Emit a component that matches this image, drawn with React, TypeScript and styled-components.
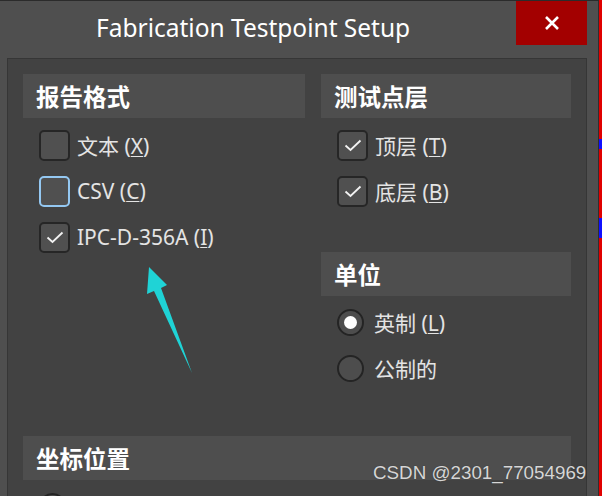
import styled, { createGlobalStyle } from "styled-components";

const GlobalStyle = createGlobalStyle`
  html, body {
    margin: 0;
    padding: 0;
    width: 602px;
    height: 496px;
    overflow: hidden;
    background: #e00000;
  }
`;

const Screen = styled.div`
  display: flex;
  width: 602px;
  height: 496px;
  overflow: hidden;
  background: linear-gradient(
    #e00000 0 28%,
    #1010ff 28% 30%,
    #e00000 30% 44%,
    #1010ff 44% 48%,
    #e00000 48%
  );
`;

const Frame = styled.div`
  position: relative;
  width: 599px;
  height: 496px;
  flex: none;
  box-sizing: border-box;
  background: #4f4f4f;
  border-top: 1px solid #2b2b2b;
  border-right: 1px solid #2f2f2f;
  overflow: hidden;
  font-family: "Noto Sans", "Noto Sans CJK SC", sans-serif;
`;

const TitleBar = styled.div`
  display: flex;
  height: 57px;
`;

const Title = styled.div`
  flex: 1;
  padding-left: 96px;
  padding-top: 10px;
  font-size: 24.5px;
  color: #ffffff;
`;

const CloseButton = styled.div`
  width: 71px;
  height: 44px;
  margin-right: 11px;
  background: #a30000;
  display: flex;
  align-items: center;
  justify-content: center;
`;

const Panel = styled.div`
  margin-left: 7px;
  width: 580px;
  height: 460px;
  box-sizing: border-box;
  background: #424242;
  border: 1px solid #363636;
  padding: 15px 15px 0 15px;
`;

const Columns = styled.div`
  display: grid;
  grid-template-columns: 282px 250px;
  column-gap: 16px;
  align-items: start;
`;

const Column = styled.div`
  display: flex;
  flex-direction: column;
`;

const Header = styled.div<{ $gap?: number }>`
  height: 44px;
  margin-top: ${(p) => p.$gap ?? 0}px;
  background: #4e4e4e;
  display: flex;
  align-items: center;
  padding-left: 13px;
  font-family: "Noto Sans CJK SC", sans-serif;
  font-weight: 700;
  font-size: 23.5px;
  color: #ffffff;
`;

const List = styled.div<{ $top?: number }>`
  display: flex;
  flex-direction: column;
  padding-top: ${(p) => p.$top ?? 4}px;
  padding-left: 16px;
`;

const Row = styled.div`
  height: 46px;
  display: flex;
  align-items: center;
  gap: 7px;
  font-family: "Noto Sans", "Noto Sans CJK SC", sans-serif;
  font-size: 21px;
  color: #e4e4e4;
`;

const Box = styled.div<{ $focus?: boolean }>`
  width: 31px;
  height: 31px;
  box-sizing: border-box;
  border: 2px solid ${(p) => (p.$focus ? "#94c8f2" : "#262626")};
  border-radius: 5px;
  background: #505050;
  display: flex;
  align-items: center;
  justify-content: center;
  flex: none;
`;

const Radio = styled.div<{ $on?: boolean }>`
  width: 27px;
  height: 27px;
  box-sizing: border-box;
  border: 2px solid #242424;
  border-radius: 50%;
  background: #4d4d4d;
  display: flex;
  align-items: center;
  justify-content: center;
  flex: none;
  margin-right: 3px;

  &::after {
    content: "";
    display: ${(p) => (p.$on ? "block" : "none")};
    width: 13px;
    height: 13px;
    border-radius: 50%;
    background: #ffffff;
  }
`;

const Key = styled.span`
  text-decoration: underline;
  text-underline-offset: 2px;
  text-decoration-thickness: 1px;
`;

const Bottom = styled.div`
  margin-top: 45px;
`;

const Watermark = styled.div`
  position: absolute;
  left: 373px;
  top: 461px;
  font-family: "Liberation Sans", Arial, sans-serif;
  font-size: 18.8px;
  color: #d6d6d6;
  text-shadow: 0 0 1px #333;
  pointer-events: none;
`;

const Overlay = styled.svg`
  position: absolute;
  left: 0;
  top: 0;
  pointer-events: none;
`;

const Check = () => (
  <svg width="18" height="13" viewBox="0 0 18 13">
    <polyline
      points="1.5,6.5 6.5,11 16.5,1.5"
      fill="none"
      stroke="#f2f2f2"
      strokeWidth="1.8"
    />
  </svg>
);

function CheckRow({
  label,
  keyChar,
  checked,
  focus,
}: {
  label: string;
  keyChar: string;
  checked?: boolean;
  focus?: boolean;
}) {
  return (
    <Row>
      <Box $focus={focus}>{checked && <Check />}</Box>
      <span>
        {label} (<Key>{keyChar}</Key>)
      </span>
    </Row>
  );
}

export default function App() {
  return (
    <>
      <GlobalStyle />
      <Screen>
        <Frame>
          <TitleBar>
            <Title>Fabrication Testpoint Setup</Title>
            <CloseButton>
              <svg width="16" height="16" viewBox="0 0 16 16">
                <path
                  d="M2 2 L14 14 M14 2 L2 14"
                  stroke="#ffffff"
                  strokeWidth="2.6"
                />
              </svg>
            </CloseButton>
          </TitleBar>
          <Panel>
            <Columns>
              <Column>
                <Header>报告格式</Header>
                <List>
                  <CheckRow label="文本" keyChar="X" />
                  <CheckRow label="CSV" keyChar="C" focus />
                  <CheckRow label="IPC-D-356A" keyChar="I" checked />
                </List>
              </Column>
              <Column>
                <Header>测试点层</Header>
                <List>
                  <CheckRow label="顶层" keyChar="T" checked />
                  <CheckRow label="底层" keyChar="B" checked />
                </List>
                <Header $gap={38}>单位</Header>
                <List $top={3}>
                  <Row>
                    <Radio $on />
                    <span>
                      英制 (<Key>L</Key>)
                    </span>
                  </Row>
                  <Row>
                    <Radio />
                    <span>公制的</span>
                  </Row>
                </List>
              </Column>
            </Columns>
            <Bottom>
              <Header>坐标位置</Header>
              <List $top={3}>
                <Row>
                  <Radio />
                </Row>
              </List>
            </Bottom>
          </Panel>
          <Overlay width="599" height="496" viewBox="0 0 599 496">
            <polygon
              points="149,266 167,284 161,287 192,372 154,290 147,293"
              fill="#1fd3d6"
            />
          </Overlay>
          <Watermark>CSDN @2301_77054969</Watermark>
        </Frame>
      </Screen>
    </>
  );
}
